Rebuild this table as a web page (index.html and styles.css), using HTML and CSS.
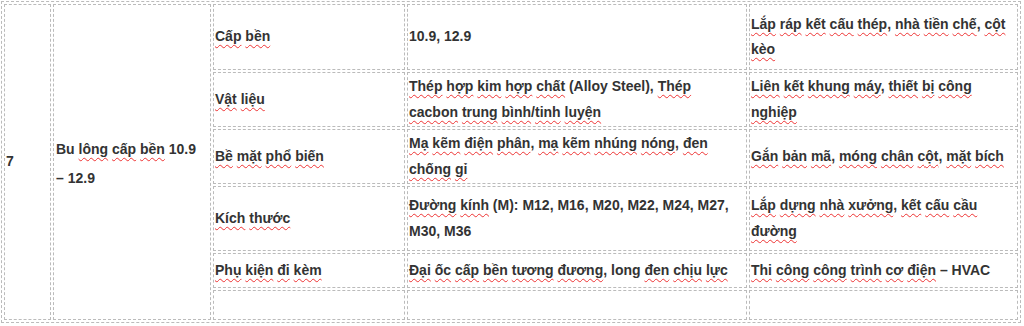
FILE: index.html
```html
<!DOCTYPE html>
<html lang="vi">
<head>
<meta charset="utf-8">
<title>Bu lông cấp bền</title>
<link rel="stylesheet" href="styles.css">
</head>
<body>
<div class="wrap">
<table class="spec">
  <colgroup>
    <col class="c1"><col class="c2"><col class="c3"><col class="c4"><col class="c5">
  </colgroup>
  <tbody>
    <tr class="r1">
      <td rowspan="6">7</td>
      <td rowspan="6" class="name">Bu <span class="s">lông</span> <span class="s">cấp</span> <span class="s">bền</span> 10.9 – 12.9</td>
      <td><span class="s">Cấp</span> <span class="s">bền</span></td>
      <td>10.9, 12.9</td>
      <td><span class="s">Lắp</span> <span class="s">ráp</span> <span class="s">kết</span> <span class="s">cấu</span> <span class="s">thép</span>, <span class="s">nhà</span> <span class="s">tiền</span> <span class="s">chế</span>, <span class="s">cột</span> <span class="s">kèo</span></td>
    </tr>
    <tr class="r2">
      <td><span class="s">Vật</span> <span class="s">liệu</span></td>
      <td><span class="s">Thép</span> <span class="s">hợp</span> <span class="s">kim</span> <span class="s">hợp</span> <span class="s">chất</span> (Alloy Steel), <span class="s">Thép</span> <span class="s">cacbon</span> <span class="s">trung</span> <span class="s">bình</span>/<span class="s">tinh</span> <span class="s">luyện</span></td>
      <td><span class="s">Liên</span> <span class="s">kết</span> <span class="s">khung</span> <span class="s">máy</span>, <span class="s">thiết</span> <span class="s">bị</span> <span class="s">công</span> <span class="s">nghiệp</span></td>
    </tr>
    <tr class="r3">
      <td><span class="s">Bề</span> <span class="s">mặt</span> <span class="s">phổ</span> <span class="s">biến</span></td>
      <td><span class="s">Mạ</span> <span class="s">kẽm</span> <span class="s">điện</span> <span class="s">phân</span>, <span class="s">mạ</span> <span class="s">kẽm</span> <span class="s">nhúng</span> <span class="s">nóng</span>, <span class="s">đen</span> <span class="s">chống</span> <span class="s">gỉ</span></td>
      <td><span class="s">Gắn</span> <span class="s">bản</span> <span class="s">mã</span>, <span class="s">móng</span> <span class="s">chân</span> <span class="s">cột</span>, <span class="s">mặt</span> <span class="s">bích</span></td>
    </tr>
    <tr class="r4">
      <td><span class="s">Kích</span> <span class="s">thước</span></td>
      <td><span class="s">Đường</span> <span class="s">kính</span> (M): M12, M16, M20, M22, M24, M27, M30, M36</td>
      <td><span class="s">Lắp</span> <span class="s">dựng</span> <span class="s">nhà</span> <span class="s">xưởng</span>, <span class="s">kết</span> <span class="s">cấu</span> <span class="s">cầu</span> <span class="s">đường</span></td>
    </tr>
    <tr class="r5">
      <td><span class="s">Phụ</span> <span class="s">kiện</span> <span class="s">đi</span> <span class="s">kèm</span></td>
      <td><span class="s">Đại</span> <span class="s">ốc</span> <span class="s">cấp</span> <span class="s">bền</span> <span class="s">tương</span> <span class="s">đương</span>, long <span class="s">đen</span> <span class="s">chịu</span> <span class="s">lực</span></td>
      <td><span class="s">Thi</span> <span class="s">công</span> <span class="s">công</span> <span class="s">trình</span> <span class="s">cơ</span> <span class="s">điện</span> – HVAC</td>
    </tr>
    <tr class="r6">
      <td></td>
      <td></td>
      <td></td>
    </tr>
  </tbody>
</table>
</div>
</body>
</html>
```
FILE: styles.css
```css
html, body {
  margin: 0;
  padding: 0;
  background: #ffffff;
}

.wrap {
  padding: 1px 0 0 1px;
}

.spec {
  width: 1020px;
  table-layout: fixed;
  border-collapse: separate;
  border-spacing: 2px;
  border: 1px dashed #bbbbbb;
  font-family: "Liberation Sans", Arial, sans-serif;
  font-size: 14px;
  font-weight: bold;
  line-height: 25.5px;
  color: #333333;
}

.c1 { width: 47px; }
.c2 { width: 158px; }
.c3 { width: 192px; }
.c4 { width: 340px; }
.c5 { width: 269px; }

.spec td {
  border: 1px dashed #bbbbbb;
  padding: 0 3px 0 1px;
  vertical-align: middle;
  box-sizing: border-box;
}

.spec td.name {
  line-height: 29px;
  padding: 4px 8px 0 2px;
}

.r1 { height: 66px; }
.r2 { height: 55px; }
.r3 { height: 55px; }
.r4 { height: 65px; }
.r5 { height: 35px; }
.r6 { height: 30px; }

.s {
  text-decoration: underline wavy #ee3333;
  text-decoration-thickness: 1px;
  text-underline-offset: 3px;
}
```
